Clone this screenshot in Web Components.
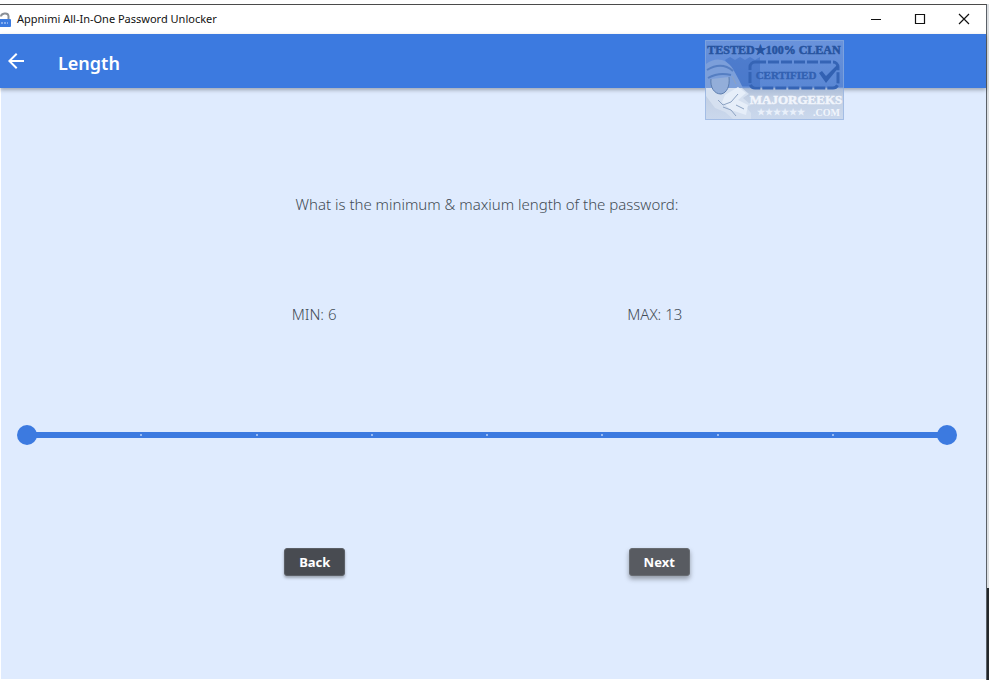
<!DOCTYPE html>
<html lang="en">
<head>
<meta charset="utf-8">
<title>Appnimi All-In-One Password Unlocker</title>
<style>
html,body{height:100%;margin:0}
body{background:#fff;font-family:"Noto Sans","Open Sans",sans-serif;overflow:hidden}
</style>
</head>
<body>
<app-window>
  <title-bar>Appnimi All-In-One Password Unlocker</title-bar>
  <app-header>Length<certified-stamp slot="stamp"></certified-stamp></app-header>
  <length-form></length-form>
</app-window>
<script>
function define(name, html, setup) {
  const template = document.createElement('template');
  template.innerHTML = html;
  customElements.define(name, class extends HTMLElement {
    constructor() {
      super();
      this.attachShadow({mode: 'open'}).append(template.content.cloneNode(true));
      if (setup) setup(this.shadowRoot, this);
    }
  });
}

define('app-window', `<style>
:host{display:grid;grid-template-columns:1fr 2px;height:100%;box-sizing:border-box;padding-top:4px}
main{display:flex;flex-direction:column;min-width:0;border-top:1px solid #4b4b4b;border-right:1px solid #5b6168;padding-bottom:1px}
aside{display:grid;grid-template-rows:584fr 92fr}
.desk{background:#dcdfe2}
.dark{background:#22272b}
</style><main><slot></slot></main><aside><div class="desk"></div><div class="dark"></div></aside>`);

define('title-bar', `<style>
:host{display:flex;align-items:center;height:29px;background:#fff;color:#111;font-size:11px;line-height:16px}
.lock{width:11px;height:16px;margin-right:6px}
.name{flex:1;white-space:nowrap;padding-bottom:1px}
button{width:44px;height:28px;padding:0 0 2px;border:0;background:none;display:grid;place-items:center}
</style>
<svg class="lock" viewBox="0 0 11 16"><path d="M1 4.500C1 1 8 0 8.500 4v3" fill="none" stroke="#8a8f96" stroke-width="2"/><rect x="-1" y="7" width="12" height="8" rx="1" fill="#3c7be0"/><path d="M1 11h7" stroke="#9fc0f4" stroke-width="1.500" stroke-dasharray="2 1"/></svg>
<span class="name"><slot></slot></span>
<button aria-label="Minimize"><svg width="12" height="12" viewBox="0 0 12 12"><path d="M1 6.500h10" stroke="#111"/></svg></button>
<button aria-label="Maximize"><svg width="12" height="12" viewBox="0 0 12 12"><path d="M1.500 1.500h9v9h-9z" fill="none" stroke="#111" stroke-width="1.200"/></svg></button>
<button aria-label="Close"><svg width="12" height="12" viewBox="0 0 12 12"><path d="M1 1l10 10M11 1L1 11" stroke="#111" stroke-width="1.200"/></svg></button>`);

define('app-header', `<style>
:host{position:relative;z-index:1;display:flex;align-items:center;height:54px;background:#3c7ae0;color:#fff;box-shadow:0 2px 4px rgba(0,0,0,.3)}
button{width:32px;height:48px;padding:0;border:0;background:none;margin-right:26px;display:flex;align-items:center;padding-left:4px}
h1{margin:0;font-size:18px;line-height:28px;font-weight:600;padding-top:4px}
.stamp{position:absolute;top:6px;right:142px}
</style>
<button aria-label="Go back"><svg width="24" height="24" viewBox="0 0 24 24"><path d="M20 11H7.830l5.590-5.590L12 4l-8 8 8 8 1.410-1.410L7.830 13H20z" fill="#fff"/></svg></button>
<h1><slot></slot></h1><div class="stamp"><slot name="stamp"></slot></div>`);

define('certified-stamp', `<style>
:host{display:block}
svg{display:block;font-family:"Liberation Serif",serif;font-weight:700}
</style>
<svg width="139" height="80" viewBox="0 0 139 80" role="img" aria-label="Tested 100% clean, certified by MajorGeeks.com">
<defs><linearGradient id="g" x2="0" y2="1"><stop offset="0" stop-color="#6a93dc"/><stop offset=".59" stop-color="#5a87d4"/><stop offset=".61" stop-color="#aabbd6"/><stop offset=".72" stop-color="#c3d0e4"/><stop offset="1" stop-color="#cad8ed"/></linearGradient></defs>
<rect x=".5" y=".5" width="138" height="79" fill="url(#g)" stroke="#8faede" stroke-opacity=".7"/>
<path d="M20 20l5-3 5 3 5-3 5 3 5-3 5 3 5-3v29H36z" fill="#3f70c4" opacity=".6"/>
<path d="M1 24c9-7 20-6 27 5l6 11 4 8H1z" fill="#7c9fda"/>
<path d="M1 48h36l7 6-6 4 8 7-5 2 5 6v6H28l-8-7-10-4-9-12z" fill="#d5e0f0"/>
<path d="M20 55l13-8 8 6-8 7 10 5-2 10-15-5-9-8z" fill="#e6eef9"/>
<path d="M2 30c10-6 19-5 26 1M3 38c7-4 15-5 23-3" fill="none" stroke="#4b76bb" stroke-width="2" opacity=".8"/>
<path d="M6 39c-1 8 3 15 10 15 6-1 9-8 8-17" fill="#93aed9" stroke="#5c7dae"/>
<path d="M27 36l4 8M13 60l5 5 8-3 7-8M18 67l8 3 5 6M31 65l8 4" fill="none" stroke="#8ca2c2"/>
<text x="69" y="14" text-anchor="middle" font-size="12" fill="#2754a0" stroke="#2754a0" stroke-width=".5">TESTED★100% CLEAN</text>
<rect x="45" y="22" width="88" height="26" rx="5" fill="none" stroke="#3564b5" stroke-width="3" stroke-dasharray="11 2"/>
<text x="81" y="39" text-anchor="middle" font-size="11" fill="#3261b2" stroke="#3261b2" stroke-width=".4">CERTIFIED</text>
<path d="M114 33l3-2 4 5 11-11 2 2-13 16z" fill="#3261b2"/>
<text x="91" y="64" text-anchor="middle" font-size="13" fill="#f1f5fc" stroke="#f1f5fc" stroke-width=".5">MAJORGEEKS</text>
<text x="76" y="75" text-anchor="middle" font-size="9" fill="#e9f0fa">★★★★★★</text>
<text x="135" y="76" text-anchor="end" font-size="10" fill="#f1f5fc">.COM</text>
</svg>`);

define('range-slider', `<style>
:host{display:grid;height:44px;margin:0 16px;align-items:center}
.track,input{grid-area:1/1}
.track{height:6px;margin:0 10px;background:#3c7ae0;display:flex;justify-content:space-evenly;align-items:center}
.track i{width:2px;height:2px;border-radius:1px;background:#b6d0f8}
input{appearance:none;width:100%;height:20px;margin:0;background:none;pointer-events:none}
input::-webkit-slider-thumb{appearance:none;width:20px;height:20px;border:0;border-radius:50%;background:#3c7ae0;pointer-events:auto}
</style>
<div class="track"><i></i><i></i><i></i><i></i><i></i><i></i><i></i></div>
<input type="range" min="6" max="13" value="6" aria-label="Minimum length">
<input type="range" min="6" max="13" value="13" aria-label="Maximum length">`);

define('raised-button', `<style>
:host{display:block}
button{height:28px;min-width:61px;padding:0 14px;border:1px solid #5b5f66;border-radius:3px;background:#484b51;color:#fff;font:700 13px/20px "Noto Sans","Open Sans",sans-serif;box-shadow:0 2px 3px rgba(0,0,0,.3);display:block}
:host([hovered]) button{background:#585b61;border-color:#686c72;box-shadow:0 3px 5px rgba(0,0,0,.35)}
</style><button type="button"><slot></slot></button>`);

define('length-form', `<style>
:host{flex:1;display:flex;flex-direction:column;justify-content:space-evenly;background:#dfebfe;padding:17px 13px 12px 0;margin-left:1px;color:#434b55;font-size:15px;line-height:22px;font-weight:300}
p{margin:0;text-align:center}
.row{display:flex;justify-content:space-evenly;align-items:center}
.actions{height:34px}
</style>
<p>What is the minimum &amp; maxium length of the password:</p>
<div class="row"><output id="min"></output><output id="max"></output></div>
<range-slider></range-slider>
<div class="row actions"><raised-button>Back</raised-button><raised-button hovered>Next</raised-button></div>`, root => {
  customElements.upgrade(root);
  const slider = root.querySelector('range-slider');
  const [low, high] = slider.shadowRoot ? slider.shadowRoot.querySelectorAll('input') : [{value: 6}, {value: 13}];
  const show = () => {
    root.getElementById('min').textContent = 'MIN: ' + low.value;
    root.getElementById('max').textContent = 'MAX: ' + high.value;
  };
  show();
  if (slider.shadowRoot) slider.shadowRoot.addEventListener('input', show);
});
</script>
</body>
</html>
